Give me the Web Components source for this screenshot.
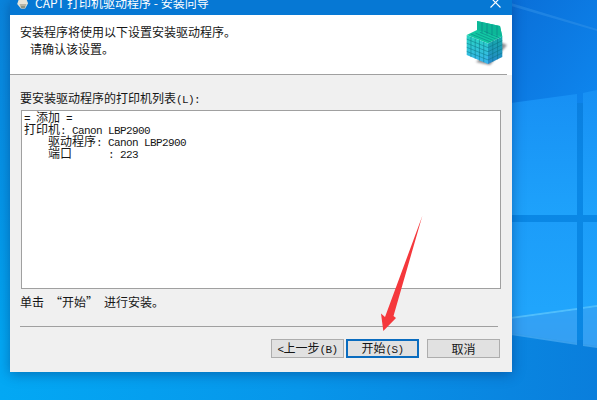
<!DOCTYPE html>
<html lang="zh-CN">
<head>
<meta charset="utf-8">
<title>CAPT</title>
<style>
html,body{margin:0;padding:0;width:597px;height:400px;overflow:hidden;background:#0a7fdf}
</style>
</head>
<body>
<desktop-screen>
  <wizard-window title-text="CAPT 打印机驱动程序 - 安装向导">
    <wizard-header slot="header">
      <sim-text t="安装程序将使用以下设置安装驱动程序。"></sim-text>
      <sim-text t=" 请确认该设置。" style="padding-left:4px"></sim-text>
    </wizard-header>
    <sim-text slot="label" t="要安装驱动程序的打印机列表(L):"></sim-text>
    <printer-list slot="list">
      <sim-text t="= 添加 ="></sim-text>
      <sim-text t="打印机: Canon LBP2900"></sim-text>
      <sim-text t="    驱动程序: Canon LBP2900"></sim-text>
      <sim-text t="    端口      : 223"></sim-text>
    </printer-list>
    <sim-text slot="note" t="单击 “开始” 进行安装。"></sim-text>
    <wiz-button slot="buttons" t="<上一步(B)"></wiz-button>
    <wiz-button slot="buttons" t="开始(S)" primary></wiz-button>
    <wiz-button slot="buttons" t="取消" style="margin-left:6px"></wiz-button>
  </wizard-window>
  <red-arrow></red-arrow>
</desktop-screen>
<script>
const FONT = '"Noto Sans CJK SC","Noto Sans",sans-serif';

class SimText extends HTMLElement {
  constructor(){ super(); this.attachShadow({mode:'open'}); }
  connectedCallback(){
    const t = this.getAttribute('t') || '';
    const esc = s => s.replace(/&/g,'&amp;').replace(/</g,'&lt;');
    const html = t.split(/([\x20-\x7e]+)/).filter(Boolean).map(p =>
      /^[\x20-\x7e]/.test(p) ? `<span class="m">${esc(p)}</span>` : `<span>${esc(p)}</span>`).join('');
    this.shadowRoot.innerHTML = `<style>
      :host{display:block;white-space:pre;font-family:${FONT};font-size:12px;color:#161616}
      .m{font-family:"Liberation Mono",monospace;font-size:11px;letter-spacing:-.6px}
    </style>${html}`;
  }
}
customElements.define('sim-text', SimText);

class DesktopScreen extends HTMLElement {
  constructor(){
    super();
    this.attachShadow({mode:'open'}).innerHTML = `<style>
      :host{display:block;position:relative;width:597px;height:400px;overflow:hidden}
      svg{position:absolute;left:0;top:0}
    </style>
    <svg width="597" height="400" viewBox="0 0 597 400">
      <defs>
        <linearGradient id="bg" x1="0" y1="0" x2="0" y2="1">
          <stop offset="0" stop-color="#0b74d8"/>
          <stop offset=".45" stop-color="#0a88e6"/>
          <stop offset="1" stop-color="#0a86e2"/>
        </linearGradient>
        <linearGradient id="left" x1="0" y1="0" x2="0" y2="1">
          <stop offset="0" stop-color="#0a84dc"/>
          <stop offset=".5" stop-color="#0596e8"/>
          <stop offset="1" stop-color="#00adf5"/>
        </linearGradient>
        <linearGradient id="bottom" x1="0" y1="0" x2="1" y2="0">
          <stop offset="0" stop-color="#03a8f4"/>
          <stop offset=".5" stop-color="#0796ea"/>
          <stop offset="1" stop-color="#0a7edc"/>
        </linearGradient>
        <linearGradient id="top" x1="0" y1="0" x2="1" y2="1">
          <stop offset="0" stop-color="#0a6fd8"/>
          <stop offset="1" stop-color="#0e86ee"/>
        </linearGradient>
        <linearGradient id="pane" x1="0" y1="0" x2="0" y2="1">
          <stop offset="0" stop-color="#1790f4"/>
          <stop offset="1" stop-color="#1ea2fb"/>
        </linearGradient>
        <linearGradient id="pane2" x1="0" y1="0" x2="0" y2="1">
          <stop offset="0" stop-color="#1c9df9"/>
          <stop offset=".72" stop-color="#20a5fc"/>
          <stop offset="1" stop-color="#2c9cf2"/>
        </linearGradient>
      </defs>
      <rect width="597" height="400" fill="url(#bg)"/>
      <rect x="0" y="0" width="10" height="400" fill="url(#left)"/>
      <rect x="0" y="340" width="597" height="60" fill="url(#bottom)"/>
      <rect x="511" y="0" width="86" height="103" fill="url(#top)"/>
      <polygon points="511,3 597,29 597,31 511,6" fill="#2f8fe8" opacity=".55"/>
      <polygon points="511,103 577,94 577,215 511,215" fill="url(#pane)"/>
      <polygon points="583,93 597,90 597,215 583,215" fill="url(#pane)"/>
      <polygon points="511,222 577,222 577,343 511,333" fill="url(#pane2)"/>
      <polygon points="583,222 597,222 597,346 583,344" fill="url(#pane2)"/>
      <polygon points="511,317 577,308 577,310 511,319" fill="#5cc4fc" opacity=".8"/>
      <polygon points="583,307 597,305 597,307 583,309" fill="#5cc4fc" opacity=".7"/>
      <polygon points="511,319 577,310 577,343 511,333" fill="#3aa2f2" opacity=".65"/>
      <polygon points="583,309 597,307 597,346 583,344" fill="#3aa2f2" opacity=".65"/>
      <polygon points="511,333 577,343 577,345 511,335" fill="#58b4f6" opacity=".6"/>
      <polygon points="583,344 597,346 597,348 583,346" fill="#58b4f6" opacity=".6"/>
    </svg>
    <slot></slot>`;
  }
}
customElements.define('desktop-screen', DesktopScreen);

class WizardWindow extends HTMLElement {
  constructor(){
    super();
    this.attachShadow({mode:'open'}).innerHTML = `<style>
      :host{position:absolute;left:10px;top:0;width:502px;height:372px;display:flex;flex-direction:column;
        background:#f0f0f0;box-shadow:0 2px 12px rgba(0,30,90,.4);font-family:${FONT};font-size:12px}
      .bar{height:15px;flex:none;background:#0678d4;position:relative;overflow:hidden;display:flex;align-items:flex-end;padding:0 0 4px 5px;box-sizing:border-box}
      .bar .t{color:#fff;font-size:12px;line-height:16px;margin-left:4px;white-space:pre;flex:none}
      .bar .ic{flex:none;margin-bottom:-2.5px}
      .bar .x{position:absolute;right:11px;top:-3px}
      .hd{flex:none}
      .body{flex:1;display:flex;flex-direction:column;padding:15px 12px 0 10px;min-height:0}
      .lab{height:16px;line-height:16px;padding-bottom:4px}
      .note{margin-top:5px;height:16px;line-height:16px}
      hr{margin:16px 2px 0 0;border:0;height:1px;background:#a0a0a0;flex:none}
      .btns{display:flex;justify-content:flex-end;gap:2px;margin-top:12px}
    </style>
    <div class="bar">
      <svg class="ic" width="16" height="14.5" viewBox="0 0 22 20">
        <path d="M5 1h11l2 5-4 7H8L3 7z" fill="#e8e4d8"/>
        <path d="M6 7h10l-3 6H9z" fill="#b8b4a4"/>
        <path d="M8 10h6v2H8z" fill="#7f8a7a"/>
      </svg>
      <span class="t"></span>
      <svg class="x" width="11" height="11" viewBox="0 0 11 11"><path d="M.5.5l10 10M10.5.5l-10 10" stroke="#fff" stroke-width="1.1" fill="none"/></svg>
    </div>
    <div class="hd"><slot name="header"></slot></div>
    <div class="body">
      <div class="lab"><slot name="label"></slot></div>
      <slot name="list"></slot>
      <div class="note"><slot name="note"></slot></div>
      <hr>
      <div class="btns"><slot name="buttons"></slot></div>
    </div>`;
  }
  connectedCallback(){
    this.shadowRoot.querySelector('.t').textContent = this.getAttribute('title-text');
  }
}
customElements.define('wizard-window', WizardWindow);

class WizardHeader extends HTMLElement {
  constructor(){
    super();
    let cells = '';
    for(let i=1;i<5;i++){ const x=466.7+i*4.26, y=35+i*1.7;
      cells+=`<path d="M${x} ${y}V${y+20.4}"/>`; }
    for(let j=1;j<5;j++){ const d=j*4.1;
      cells+=`<path d="M466.7 ${35+d}L488 ${43.5+d}L502.3 ${36.5+d}"/>`; }
    for(let i=1;i<3;i++){ const x=488+i*4.77, y=43.5-i*2.33;
      cells+=`<path d="M${x} ${y}V${y+20.5}"/>`; }
    for(let i=1;i<5;i++){ cells+=`<path d="M${466.7+i*4.4} ${35-i*.9}L${488+i*2.9} ${43.5-i*1.4}"/>`; }
    for(let i=1;i<5;i++){ cells+=`<path d="M${477+i*5} ${21+i*1.2}V${32+i*1.2}"/>`; }
    this.attachShadow({mode:'open'}).innerHTML = `<style>
      :host{display:block;position:relative;height:60px;box-sizing:border-box;background:#fff;padding:8px 0 0 10px;line-height:17px}
      .rule{position:absolute;left:0;right:5px;bottom:0;height:1px;background:#a0a0a0}
      svg{position:absolute;left:445px;top:0}
    </style>
    <slot></slot>
    <div class="rule"></div>
    <svg width="57" height="60" viewBox="455 15 57 60">
      <defs>
        <linearGradient id="lf" x1="0" y1="0" x2="0" y2="1"><stop offset="0" stop-color="#28d4c0"/><stop offset="1" stop-color="#38b2ee"/></linearGradient>
        <linearGradient id="rf" x1="0" y1="0" x2="0" y2="1"><stop offset="0" stop-color="#16aaa8"/><stop offset="1" stop-color="#2688cc"/></linearGradient>
        <filter id="bl"><feGaussianBlur stdDeviation="1.2"/></filter>
      </defs>
      <polygon points="500,42 507,45 490,65 476,62" fill="#68696e" opacity=".75" filter="url(#bl)"/>
      <polygon points="466.7,35 477,30 477,21 500,26 502.3,36.5 488,43.5" fill="#12c8a2"/>
      <polygon points="477,30 500,36 502.3,36.5 500,26 477,21" fill="#0cb898"/>
      <polygon points="466.7,35 488,43.5 488,64 466.7,55" fill="url(#lf)"/>
      <polygon points="488,43.5 502.3,36.5 502.3,57 488,64" fill="url(#rf)"/>
      <g stroke="#08707e" stroke-opacity=".6" stroke-width=".8" fill="none">${cells}</g>
    </svg>`;
  }
}
customElements.define('wizard-header', WizardHeader);

class PrinterList extends HTMLElement {
  constructor(){
    super();
    this.attachShadow({mode:'open'}).innerHTML = `<style>
      :host{display:block;flex:none;width:480px;height:179px;box-sizing:border-box;margin-left:1px;background:#fff;border:1px solid #a0a0a0;padding:0 0 0 2px}
      ::slotted(sim-text){line-height:12px;height:12px}
    </style><slot></slot>`;
  }
}
customElements.define('printer-list', PrinterList);

class WizButton extends HTMLElement {
  constructor(){
    super();
    this.attachShadow({mode:'open'}).innerHTML = `<style>
      :host{display:flex;align-items:center;justify-content:center;width:73px;height:19px;box-sizing:border-box;background:#e1e1e1;border:1px solid #adadad;line-height:16px}
      :host([primary]){border:2px solid #0a6cbf}
    </style><sim-text></sim-text>`;
  }
  connectedCallback(){
    const s=this.shadowRoot.querySelector('sim-text');
    s.setAttribute('t', this.getAttribute('t'));
    s.connectedCallback();
  }
}
customElements.define('wiz-button', WizButton);

class RedArrow extends HTMLElement {
  constructor(){
    super();
    this.attachShadow({mode:'open'}).innerHTML = `<style>
      :host{position:absolute;left:375px;top:210px;width:55px;height:125px;display:block}
      svg{display:block}
    </style>
    <svg width="55" height="125" viewBox="375 210 55 125">
      <polygon points="422.3,216 393.5,316 396,318 383.3,331 381,313.5 385,317" fill="#f5383c"/>
    </svg>`;
  }
}
customElements.define('red-arrow', RedArrow);
</script>
</body>
</html>
